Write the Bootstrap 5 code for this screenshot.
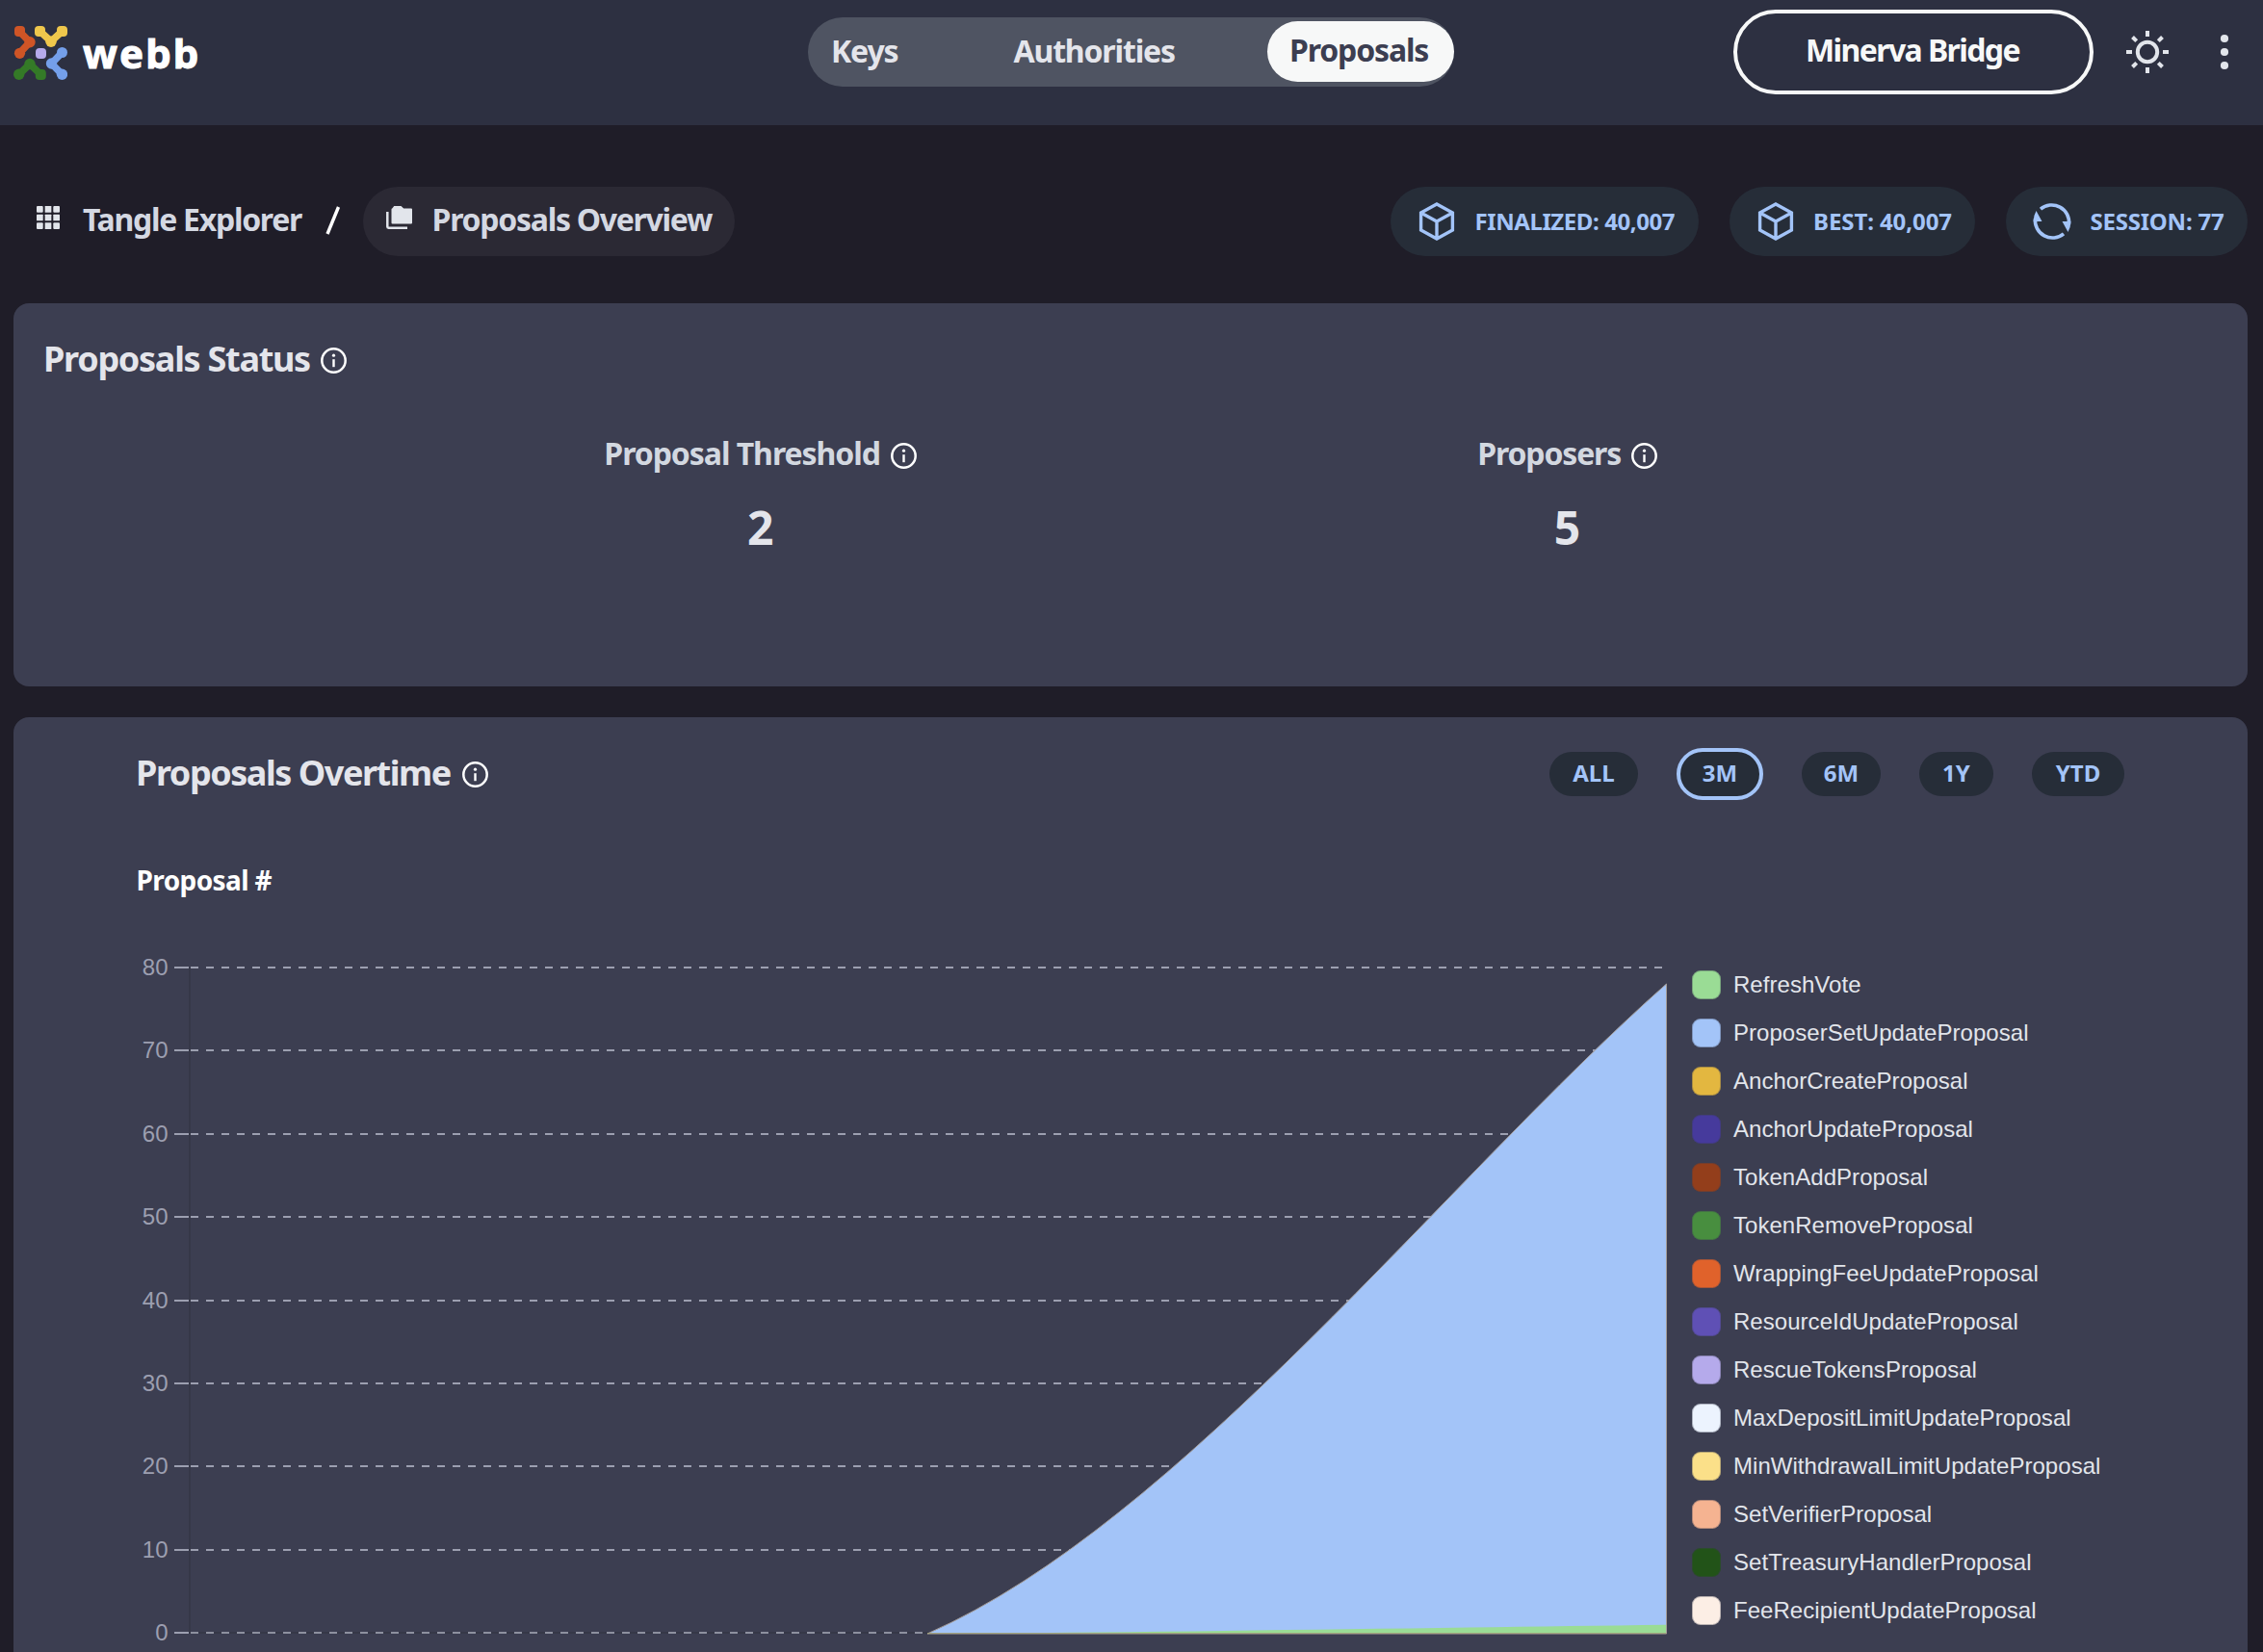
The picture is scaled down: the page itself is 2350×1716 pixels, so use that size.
<!DOCTYPE html>
<html lang="en">
<head>
<meta charset="utf-8">
<title>Webb – Proposals Overview</title>
<link href="https://cdn.jsdelivr.net/npm/bootstrap@5.3.0/dist/css/bootstrap.min.css" rel="stylesheet">
<style>
  :root { --ink-blue: #a3c4f8; --panel: #3c3e51; --chip: #262d38; }
  html, body { height: 1716px; overflow: hidden; }
  body { background: #1f1d28; color: #e4e5eb; font-family: "Noto Sans", "Open Sans", sans-serif; font-weight: 700; font-size: 32px; line-height: 1; }
  svg { display: block; flex: none; }
  .topbar { height: 130px; background: #2d3041; padding: 10px 31px 0 14px; display: grid; grid-template-columns: 825px 671px 1fr; align-items: start; }
  .topbar > div, .topbar > a, .topbar > nav { height: 88px; }
  .brand-text { font-size: 42px; letter-spacing: 2.1px; color: #fff; -webkit-text-stroke: 1px #fff; margin-left: 16px; padding-top: 1px; }
  .tabs-pill { height: 72px !important; margin-top: 8px; background: #4f5462; border-radius: 36px; }
  .tabs-pill a { height: 63px; line-height: 59px; padding: 0 22px 0 24px; border-radius: 32px; color: #e4e5eb; letter-spacing: -1.15px; text-decoration: none; }
  .tabs-pill a.active { background: #f7f8f8; color: #3c3e51; width: 194px; padding: 0 0 0 23px; margin-bottom: 1px; }
  .bridge { width: 374px; height: 88px; border: 4px solid #f7f8f8; border-radius: 44px; color: #f7f8f8; letter-spacing: -1.6px; font-weight: 700; font-size: 32px; padding: 0 2px 5px 0; line-height: 1; }
  .crumb-row { margin: 64px 16px 0 14px; height: 72px; }
  .crumb { color: #d4d8e2; letter-spacing: -1.28px; padding-bottom: 4px; }
  .crumb-pill { width: 386px; height: 72px; border-radius: 36px; background: #2b2934; padding-left: 24px; }
  .stat-chip { height: 72px; border-radius: 36px; background: var(--chip); color: var(--ink-blue); font-size: 24px; }
  .stat-chip span { padding-bottom: 1px; }
  .panel-box { background: var(--panel); border-radius: 16px; margin: 0 16px 0 14px; }
  .status-box { margin-top: 49px; height: 398px; padding: 32px 31px 0; }
  .over-box { margin-top: 32px; height: 971px; padding: 32px 128px 0 126px; border-radius: 16px 16px 0 0; }
  .head-line { height: 54px; font-size: 36px; }
  .head-line h2 { font-size: 36px; font-weight: 700; line-height: 1; margin: 0; padding-bottom: 3px; letter-spacing: -1.28px; }
  .metric-name { height: 54px; color: #d3d8e0; letter-spacing: -1.05px; }
  .metric-name span { padding-bottom: 4px; }
  .metric-num { font-size: 48px; margin-top: 24px; }
  .range { height: 46px; border: 0; border-radius: 23px; background: var(--chip); color: var(--ink-blue); font-size: 24px; line-height: 1; font-weight: 700; padding: 0 0 2px; }
  .range.on { height: 54px; border: 4px solid var(--ink-blue); border-radius: 27px; }
  .axis-title { font-size: 28px; color: #fff; letter-spacing: -.6px; margin-top: 69px; margin-left: 1.5px; line-height: 28px; }
  .legend-list { margin: 18px 0 0; padding: 0; list-style: none; font: 400 24px/30px "Liberation Sans", Arial, sans-serif; color: #e2e5eb; gap: 20px; }
  .legend-list span { margin-left: 13px; letter-spacing: .04px; }
  .legend-list i { width: 30px; height: 30px; border-radius: 9px; flex: none; box-shadow: inset 0 0 0 1px rgba(60,62,81,.35); }
  .chart text { font: 400 24px "Liberation Sans", Arial, sans-serif; fill: #9c9fb0; text-anchor: end; }
</style>
</head>
<body>
<svg width="0" height="0" class="position-absolute">
  <symbol id="info" viewBox="0 0 27 27"><circle cx="13.5" cy="13.5" r="12.2" fill="none" stroke="#fff" stroke-width="2.5"/><path d="M13.5 12.2v8" stroke="#fff" stroke-width="2.4"/><circle cx="13.5" cy="8.2" r="1.6" fill="#fff"/></symbol>
  <symbol id="cube" viewBox="0 0 40 40"><path d="M20 2 36.4 11v18L20 38 3.600 29V11zM3.600 11 20 20l16.400-9M20 20v18" fill="none" stroke="#a3c4f8" stroke-width="3.400"/></symbol>
</svg>

<header class="topbar">
  <a class="d-flex align-items-center text-decoration-none" href="#">
    <svg width="56" height="56" viewBox="0 0 56 56" fill="none" stroke-width="7.400" stroke-linejoin="round" style="margin-top:2px">
      <g stroke="#cf5526" fill="none"><path d="M6.500 6 17 16.700 6.500 28"/><g fill="#cf5526" stroke="none"><rect x="1" y="0" width="11" height="11" rx="4"/><circle cx="17" cy="16.700" r="5.700"/><circle cx="6.500" cy="28.300" r="5.600"/></g></g>
      <g stroke="#efc74c"><path d="M27.800 5.800 39 16 50.300 5.800"/><g fill="#efc74c" stroke="none"><rect x="22" y="0" width="11" height="11" rx="4"/><rect x="45" y="0" width="11" height="11" rx="4"/><circle cx="39" cy="16.300" r="5.700"/></g></g>
      <rect x="23" y="23" width="11" height="11" rx="4" fill="#b5aaeb"/>
      <g stroke="#347a27"><path d="M5.700 50.300 17 39.500 28.300 50.300"/><g fill="#347a27" stroke="none"><circle cx="5.700" cy="50.300" r="5.700"/><rect x="22.800" y="45" width="11" height="11" rx="4"/><circle cx="17" cy="39.500" r="5.700"/></g></g>
      <g stroke="#749fea"><path d="M50.500 27.500 39.500 39 50.500 50.300"/><g fill="#749fea" stroke="none"><circle cx="50.500" cy="27.500" r="5.500"/><circle cx="39.500" cy="39" r="5.700"/><circle cx="50.500" cy="50.300" r="5.700"/></g></g>
    </svg>
    <span class="brand-text">webb</span>
  </a>
  <nav class="tabs-pill d-flex align-items-center justify-content-between">
    <a href="#">Keys</a><a href="#">Authorities</a><a href="#" class="active">Proposals</a>
  </nav>
  <div class="d-flex align-items-center justify-content-end">
    <button class="bridge bg-transparent">Minerva Bridge</button>
    <svg width="44" height="44" viewBox="-22 -22 44 44" stroke="#e2e5eb" stroke-width="4" fill="none" style="margin-left:34px"><circle r="10.200"/><path d="M0-22v6M0 22v-6M-22 0h6M22 0h-6M-15.500-15.500l4.200 4.200M15.500-15.500l-4.200 4.200M-15.500 15.500l4.200-4.200M15.500 15.500l-4.200-4.200"/></svg>
    <svg width="18" height="44" viewBox="-9 -22 18 44" fill="#e2e5eb" style="margin-left:49px"><circle cy="-14" r="4.100"/><circle r="4.100"/><circle cy="14" r="4.100"/></svg>
  </div>
</header>

<div class="crumb-row d-flex align-items-center">
  <svg width="24" height="24" viewBox="0 0 24 24" fill="#e2e5eb" style="margin:-8px 0 0 24px"><rect width="6.700" height="6.700" rx="1"/><rect x="8.650" width="6.700" height="6.700" rx=".5"/><rect x="17.300" width="6.700" height="6.700" rx="1"/><rect y="8.650" width="6.700" height="6.700" rx=".5"/><rect x="8.650" y="8.650" width="6.700" height="6.700" rx=".5"/><rect x="17.300" y="8.650" width="6.700" height="6.700" rx=".5"/><rect y="17.300" width="6.700" height="6.700" rx="1"/><rect x="8.650" y="17.300" width="6.700" height="6.700" rx=".5"/><rect x="17.300" y="17.300" width="6.700" height="6.700" rx="1"/></svg>
  <span class="crumb" style="margin-left:24px">Tangle Explorer</span>
  <svg width="16" height="30" viewBox="0 0 16 30" style="margin:-3px 23px 0 25px"><path d="M2 29 13.500 1" stroke="#fff" stroke-width="3.400"/></svg>
  <div class="crumb-pill d-flex align-items-center">
    <svg width="27" height="24" viewBox="0 0 27 24" style="margin-top:-8px"><path d="M1.300 6v15.500q0 1.200 1.200 1.200H22" fill="none" stroke="#e2e5eb" stroke-width="2.500"/><path d="M8.200 0H15.500l2.700 2.600H26q1 0 1 1V17.600q0 1-1 1H6.500q-1 0-1-1V3.500q0-1 1-1.300z" fill="#e2e5eb"/></svg>
    <span class="crumb" style="margin-left:20.500px">Proposals Overview</span>
  </div>
  <div class="d-flex ms-auto" style="gap:32px">
    <div class="stat-chip d-flex align-items-center" style="width:320px;padding-left:28px"><svg width="40" height="40"><use href="#cube"/></svg><span style="margin-left:19.500px;letter-spacing:-.42px">FINALIZED: 40,007</span></div>
    <div class="stat-chip d-flex align-items-center" style="width:255px;padding-left:28px"><svg width="40" height="40"><use href="#cube"/></svg><span style="margin-left:19px;letter-spacing:-.08px">BEST: 40,007</span></div>
    <div class="stat-chip d-flex align-items-center" style="width:251px;padding-left:28px">
      <svg width="40" height="40" viewBox="0 0 40 40" fill="none" stroke="#a3c4f8" stroke-width="3.600"><path d="M8 7.200A18 18 0 0 1 37.500 23M32 32.800A18 18 0 0 1 2.500 17"/><path d="M30.500 20H39.400q0 6-2.900 11zM9.500 20H.6q0-6 2.900-11z" fill="#a3c4f8" stroke="none"/></svg>
      <span style="margin-left:19.500px;letter-spacing:-.22px">SESSION: 77</span></div>
  </div>
</div>

<section class="panel-box status-box">
  <div class="head-line d-flex align-items-center"><h2>Proposals Status</h2><svg width="27" height="27" style="margin-left:11px"><use href="#info"/></svg></div>
  <div class="d-flex justify-content-evenly" style="margin-top:45px">
    <div class="text-center"><div class="metric-name d-flex align-items-center"><span>Proposal Threshold</span><svg width="27" height="27" style="margin-left:11px"><use href="#info"/></svg></div><div class="metric-num">2</div></div>
    <div class="text-center"><div class="metric-name d-flex align-items-center" style="letter-spacing:-1.15px"><span>Proposers</span><svg width="27" height="27" style="margin-left:10.500px"><use href="#info"/></svg></div><div class="metric-num">5</div></div>
  </div>
</section>

<section class="panel-box over-box">
  <div class="head-line d-flex align-items-center"><h2 style="margin-left:1px;letter-spacing:-1.45px">Proposals Overtime</h2><svg width="27" height="27" style="margin-left:12px"><use href="#info"/></svg>
    <div class="d-flex align-items-center ms-auto" style="gap:40px">
      <button class="range" style="width:92px">ALL</button><button class="range on" style="width:90px">3M</button><button class="range" style="width:82px">6M</button><button class="range" style="width:77px">1Y</button><button class="range" style="width:96px">YTD</button>
    </div>
  </div>
  <div class="axis-title">Proposal #</div>
  <div class="d-flex" style="margin-top:62px">
    <svg class="chart" width="1617" height="726" viewBox="140 990 1617 726">
      <g stroke="#363848" stroke-width="2"><path d="M197 1005V1697M196 1696H1730"/></g>
      <g id="gridlines"></g>
      <path d="M963 1697C1226 1581 1501 1225 1730.500 1022V1697z" fill="#a3c4f8" stroke="#a39c98" stroke-width="1"/>
      <path d="M963 1697C1193 1695.700 1501 1690.700 1730 1687.800V1697z" fill="#9adc95"/>
      <path d="M963 1696.600H1730.500" stroke="#a3a27c"/>
    </svg>
    <ul class="legend-list d-flex flex-column" id="legend"></ul>
  </div>
</section>

<script src="https://cdn.jsdelivr.net/npm/bootstrap@5.3.0/dist/js/bootstrap.bundle.min.js"></script>
<script>
  const series = [['RefreshVote','#9adc95'],['ProposerSetUpdateProposal','#a3c4f8'],['AnchorCreateProposal','#e3b740'],['AnchorUpdateProposal','#463a9c'],['TokenAddProposal','#933e1b'],['TokenRemoveProposal','#488e3f'],['WrappingFeeUpdateProposal','#e0622b'],['ResourceIdUpdateProposal','#5f50b5'],['RescueTokensProposal','#b5aaeb'],['MaxDepositLimitUpdateProposal','#ecf3fe'],['MinWithdrawalLimitUpdateProposal','#fbe089'],['SetVerifierProposal','#f5b391'],['SetTreasuryHandlerProposal','#225318'],['FeeRecipientUpdateProposal','#fceee5']];
  document.getElementById('legend').innerHTML = series.map(([name, color]) =>
    `<li class="d-flex align-items-center"><i style="background:${color}"></i><span>${name}</span></li>`).join('');
  let marks = '';
  for (let v = 0; v <= 80; v += 10) {
    const y = Math.round(1696 - v * 8.6375);
    marks += `<text x="174.500" y="${y + 8}">${v}</text><path d="M181 ${y}H196" stroke="#9c9fb0" stroke-width="2"/><path d="M198 ${y}H1730" stroke="${v ? '#9c9fb0' : '#8d909f'}" stroke-width="2" stroke-dasharray="8 8"/>`;
  }
  document.getElementById('gridlines').innerHTML = marks;
</script>
</body>
</html>
